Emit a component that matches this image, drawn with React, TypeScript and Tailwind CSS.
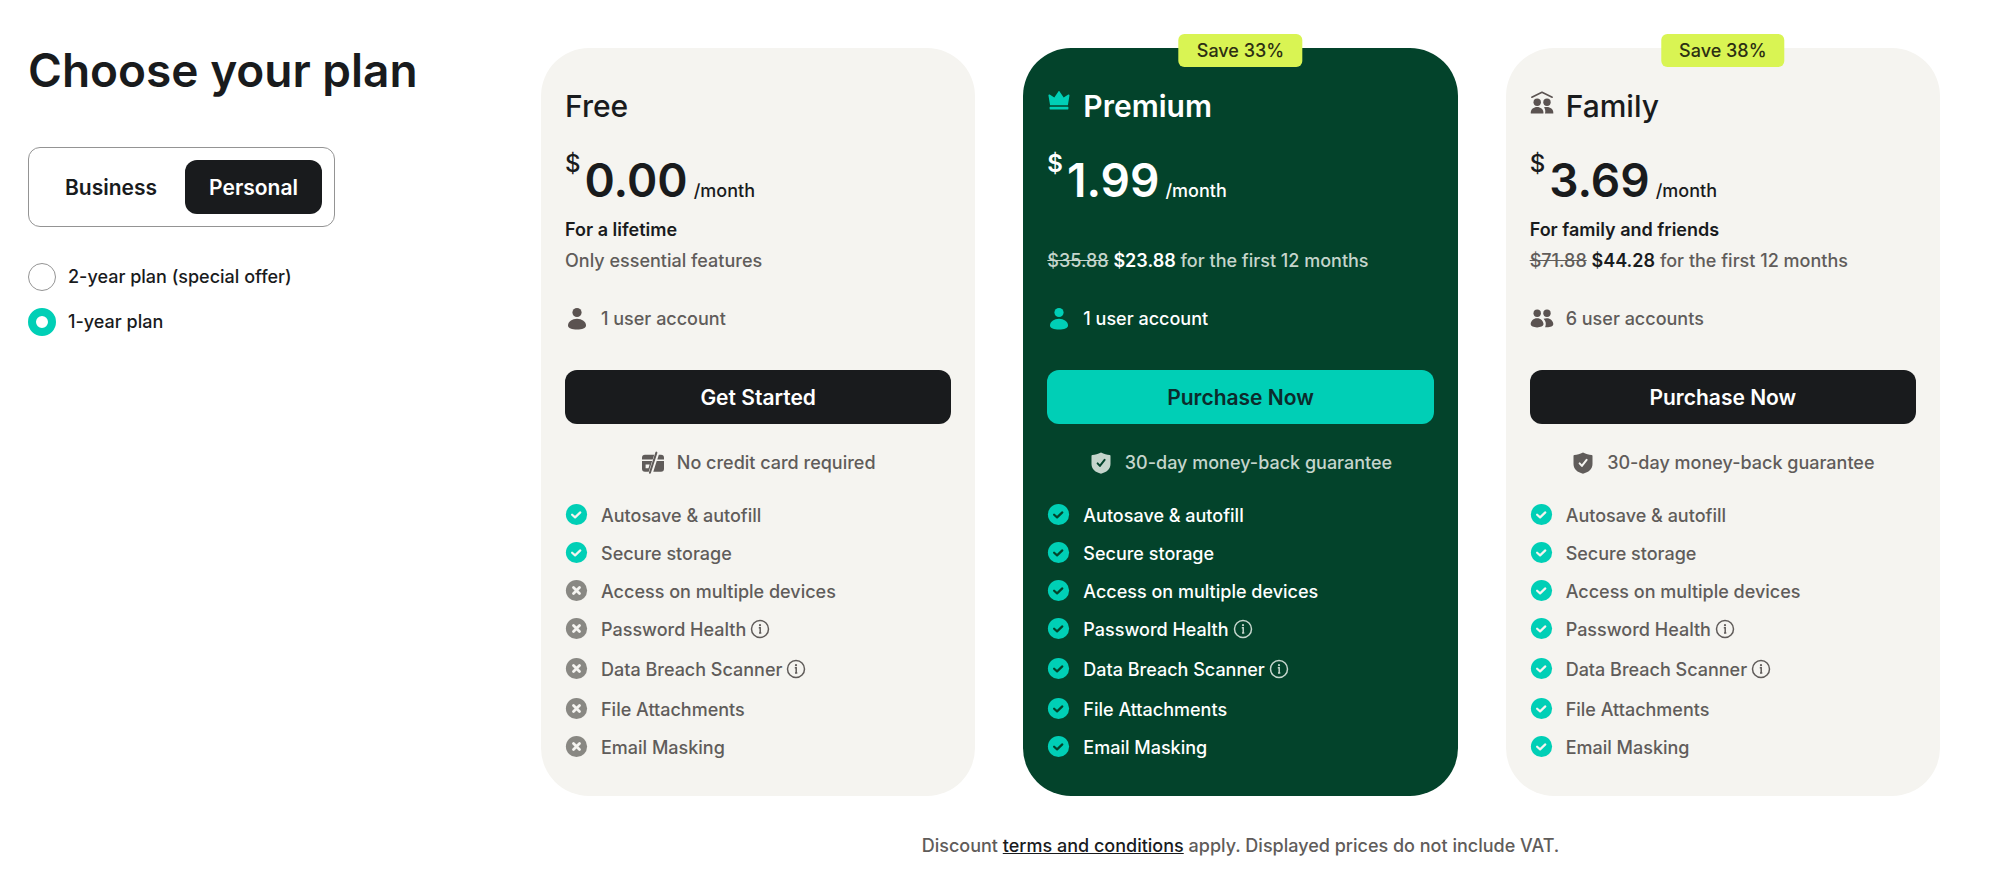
import { useState } from 'react'
import type { ReactNode } from 'react'
import { clsx } from 'clsx'

interface Feature {
  label: string
  included: boolean
  info?: boolean
}

interface Plan {
  name: string
  icon?: ReactNode
  badge?: string
  price: string
  tagline: string
  oldTotal?: string
  total?: string
  summary: string
  accountIcon: ReactNode
  accounts: string
  cta: string
  noteIcon: ReactNode
  note: string
  featured?: boolean
  features: Feature[]
}

function CrownIcon() {
  return (
    <svg viewBox="0 0 24 24" className="size-6 shrink-0" fill="currentColor" aria-hidden="true">
      <path d="M1.4 4.200c0-.7.8-1 1.300-.6L7.300 6.600 11.400.4c.3-.5.900-.5 1.200 0l4.100 6.200 4.600-3c.5-.4 1.300.1 1.200.700L20.900 14.200H3.100L1.400 4.200z" />
      <rect x="2.600" y="15.800" width="18.800" height="2.600" rx="0.6" />
    </svg>
  )
}

function HouseholdIcon() {
  return (
    <svg viewBox="0 0 24 24" className="size-6 shrink-0" fill="currentColor" aria-hidden="true">
      <path d="M1.800 6.200 12 1.200l10.200 5" fill="none" stroke="currentColor" strokeWidth="1.600" strokeLinecap="round" strokeLinejoin="round" />
      <circle cx="7.200" cy="11.200" r="3.700" />
      <circle cx="17" cy="11.200" r="3.700" />
      <path d="M.8 22.500v-1.200c0-2.900 2.900-5.300 6.300-5.300s6.300 2.400 6.300 5.300v1.200H.8z" />
      <path d="M14 16.300c.9-.2 1.900-.3 2.900-.3 3.500 0 6.400 2.400 6.400 5.400v1.100h-8.300c.6-2.500.3-4.300-1-6.200z" />
    </svg>
  )
}

function UserIcon() {
  return (
    <svg viewBox="0 0 24 24" className="size-6 shrink-0" fill="currentColor" aria-hidden="true">
      <circle cx="12" cy="5.500" r="4.600" />
      <path d="M12 11.700c5 0 9 3 9 6.700 0 2.800-4 4-9 4s-9-1.200-9-4c0-3.700 4-6.700 9-6.700z" />
    </svg>
  )
}

function UsersIcon() {
  return (
    <svg viewBox="0 0 24 24" className="size-6 shrink-0" fill="currentColor" aria-hidden="true">
      <circle cx="7.200" cy="6.300" r="3.700" />
      <circle cx="17" cy="6.300" r="3.700" />
      <path d="M7.100 11.200c3.600 0 6.400 2.700 6.400 5.900 0 2.300-2.900 3.300-6.400 3.300s-6.400-1-6.400-3.300c0-3.200 2.800-5.900 6.400-5.900z" />
      <path d="M13.600 11.800c1-.4 2-.6 3.200-.6 3.600 0 6.500 2.700 6.500 5.900 0 2.500-3.400 3.500-8.200 3.200 1.300-2.900.9-6-1.500-8.500z" />
    </svg>
  )
}

function NoCardIcon() {
  return (
    <svg viewBox="0 0 24 24" className="size-6 shrink-0" fill="currentColor" aria-hidden="true">
      <path d="M4 3.800h9.200l-1.500 4.600H1V6.800a3 3 0 0 1 3-3z" />
      <path d="M1 10.100h10.100L9 16.700l-1.300 4.100H4a3 3 0 0 1-3-3v-7.700zm3.600 3.500v3.700h2.900l1.100-3.700h-4z" fillRule="evenodd" />
      <path d="M17.800 3.800H20a3 3 0 0 1 3 3v1.600h-6.700l1.500-4.600z" />
      <path d="M15.700 10.100H23v7.700a3 3 0 0 1-3 3h-7.700l3.400-10.700z" />
      <path d="M15.400 1.600 8.900 21.800" stroke="currentColor" strokeWidth="2" strokeLinecap="round" />
    </svg>
  )
}

function ShieldIcon() {
  return (
    <svg viewBox="0 0 24 24" className="size-6 shrink-0" aria-hidden="true">
      <path
        d="M12 1.400c3 1.500 6 2.300 8.600 2.500.500 0 .9.400.9.900v8.200c0 5-4 8.400-9.500 9.700-5.500-1.300-9.500-4.700-9.500-9.700V4.800c0-.5.400-.9.900-.9C6 3.700 9 2.900 12 1.400z"
        fill="currentColor"
      />
      <path d="m8.600 12.400 2.300 2.500 4.700-6" className="stroke-(--card)" fill="none" strokeWidth="2" strokeLinecap="round" strokeLinejoin="round" />
    </svg>
  )
}

function StatusIcon({ included }: { included: boolean }) {
  return (
    <svg
      viewBox="0 0 24 24"
      className={clsx('size-6 shrink-0', included ? 'text-[#00cfb6]' : 'text-[#898883]')}
      role="img"
      aria-label={included ? 'Included' : 'Not included'}
    >
      <circle cx="11.500" cy="11.500" r="10.600" fill="currentColor" />
      <path
        d={included ? 'm7.100 11.700 3 2.700 5.200-5' : 'm8.500 8.500 6 6m0-6-6 6'}
        className="stroke-(--card)"
        fill="none"
        strokeWidth={included ? 2.2 : 2.8}
        strokeLinecap="round"
        strokeLinejoin="round"
      />
    </svg>
  )
}

function InfoIcon() {
  return (
    <svg viewBox="0 0 20 20" className="size-5" fill="none" stroke="currentColor" aria-hidden="true">
      <circle cx="10" cy="10" r="8.500" strokeWidth="1.500" />
      <path d="M8.800 8.700h1.400V14M9 14h2.300" strokeWidth="1.500" />
      <circle cx="10" cy="6.200" r="1.100" fill="currentColor" stroke="none" />
    </svg>
  )
}

function buildFeatures(includedCount: number): Feature[] {
  const labels = [
    'Autosave & autofill',
    'Secure storage',
    'Access on multiple devices',
    'Password Health',
    'Data Breach Scanner',
    'File Attachments',
    'Email Masking',
  ]
  return labels.map((label, i) => ({
    label,
    included: i < includedCount,
    info: label === 'Password Health' || label === 'Data Breach Scanner',
  }))
}

const plans: Plan[] = [
  {
    name: 'Free',
    price: '0.00',
    tagline: 'For a lifetime',
    summary: 'Only essential features',
    accountIcon: <UserIcon />,
    accounts: '1 user account',
    cta: 'Get Started',
    noteIcon: <NoCardIcon />,
    note: 'No credit card required',
    features: buildFeatures(2),
  },
  {
    name: 'Premium',
    icon: <CrownIcon />,
    badge: 'Save 33%',
    price: '1.99',
    tagline: '',
    oldTotal: '$35.88',
    total: '$23.88',
    summary: 'for the first 12 months',
    accountIcon: <UserIcon />,
    accounts: '1 user account',
    cta: 'Purchase Now',
    noteIcon: <ShieldIcon />,
    note: '30-day money-back guarantee',
    featured: true,
    features: buildFeatures(7),
  },
  {
    name: 'Family',
    icon: <HouseholdIcon />,
    badge: 'Save 38%',
    price: '3.69',
    tagline: 'For family and friends',
    oldTotal: '$71.88',
    total: '$44.28',
    summary: 'for the first 12 months',
    accountIcon: <UsersIcon />,
    accounts: '6 user accounts',
    cta: 'Purchase Now',
    noteIcon: <ShieldIcon />,
    note: '30-day money-back guarantee',
    features: buildFeatures(7),
  },
]

function PlanCard({ plan }: { plan: Plan }) {
  const { featured } = plan
  const strong = featured ? 'text-white' : 'text-[#191b1d]'
  const body = featured ? 'text-white' : 'text-[#605c5a]'
  const muted = featured ? 'text-[#c5d5cc]' : 'text-[#605c5a]'
  const iconColor = featured ? 'text-[#00cfb6]' : 'text-[#5b5351]'
  const heavier = featured && 'font-semibold'

  return (
    <article
      className={clsx(
        'relative flex-1 rounded-[48px] px-6 pt-10 pb-[35px] text-[18px] leading-7 font-medium',
        featured ? 'bg-[#03432b] [--card:#03432b]' : 'bg-[#f5f4f0] [--card:#f5f4f0]',
      )}
    >
      {plan.badge && (
        <span className="absolute top-0 left-1/2 -mt-3.5 -translate-x-1/2 rounded-md bg-[#d9f453] px-4.5 pt-[3px] pb-0.5 whitespace-nowrap text-[#2c2f12]">
          {plan.badge}
        </span>
      )}

      <div className="flex gap-3">
        {plan.icon && <span className={clsx('pt-[3px]', iconColor)}>{plan.icon}</span>}
        <h2 className={clsx('text-[30px] leading-9', strong, heavier)}>{plan.name}</h2>
      </div>

      {/* currency sign hangs at the top of the digits, the period sits on their baseline */}
      <p className={clsx('mt-6 flex items-start', strong)}>
        <span className={clsx('text-[24px] leading-8', heavier)}>$</span>
        <span className="ml-1 text-[46px] leading-16 font-semibold">{plan.price}</span>
        <span className="ml-1.5 self-end pb-[7px]">/month</span>
      </p>

      <p className={clsx('mt-1 h-7 font-semibold', strong)}>{plan.tagline}</p>
      <p className={clsx('mt-[3px]', muted)}>
        {plan.oldTotal && <s>{plan.oldTotal}</s>}{' '}
        {plan.total && <span className={clsx('font-semibold', strong)}>{plan.total}</span>} {plan.summary}
      </p>

      <p className={clsx('mt-[30px] flex items-center gap-3', body)}>
        <span className={iconColor}>{plan.accountIcon}</span>
        {plan.accounts}
      </p>

      <button
        type="button"
        className={clsx(
          'mt-[37px] h-[54px] w-full rounded-xl pt-px text-[21px] font-semibold',
          featured ? 'bg-[#00cfb6] text-[#0c2b2b]' : 'bg-[#191b1d] text-white',
        )}
      >
        {plan.cta}
      </button>

      <p className={clsx('mt-[25px] flex items-center justify-center gap-3', muted)}>
        {plan.noteIcon}
        {plan.note}
      </p>

      <ul className="mt-[26px] space-y-3 leading-[26px]">
        {plan.features.map((f) => (
          <li key={f.label} className={clsx('flex items-start gap-3', f.info && 'min-h-7', body)}>
            <StatusIcon included={f.included} />
            <span>{f.label}</span>
            {f.info && (
              <button type="button" className={clsx('-ml-2 pt-0.5', muted)} aria-label={`About ${f.label}`}>
                <InfoIcon />
              </button>
            )}
          </li>
        ))}
      </ul>
    </article>
  )
}

const audiences = ['Business', 'Personal']

const terms = [
  { id: '2y', label: '2-year plan (special offer)' },
  { id: '1y', label: '1-year plan' },
]

export default function App() {
  const [audience, setAudience] = useState('Personal')
  const [term, setTerm] = useState('1y')

  return (
    <main className="flex bg-white pt-12 pr-[60px] pb-6 pl-7 font-[Inter,sans-serif] text-[18px] leading-7 font-medium text-[#191b1d]">
      <section className="w-[513px] shrink-0">
        <h1 className="text-[46px] leading-11 font-semibold">Choose your plan</h1>

        <div className="mt-[55px] inline-flex gap-1 rounded-xl border border-[#949494] p-3">
          {audiences.map((a) => (
            <button
              key={a}
              type="button"
              aria-pressed={a === audience}
              onClick={() => setAudience(a)}
              className={clsx(
                'h-[54px] rounded-xl px-6 pt-px text-[21px] font-semibold',
                a === audience && 'bg-[#191b1d] text-white',
              )}
            >
              {a}
            </button>
          ))}
        </div>

        <fieldset className="mt-9 space-y-[17px]">
          {terms.map((t) => (
            <label key={t.id} className="flex items-center gap-3">
              <input
                type="radio"
                name="term"
                value={t.id}
                checked={t.id === term}
                onChange={() => setTerm(t.id)}
                className="size-7 appearance-none rounded-full border border-[#949494] bg-white checked:border-8 checked:border-[#00cfb6]"
              />
              {t.label}
            </label>
          ))}
        </fieldset>
      </section>

      <section className="min-w-0 flex-1">
        <div className="flex gap-12">
          {plans.map((p) => (
            <PlanCard key={p.name} plan={p} />
          ))}
        </div>
        <p className="mt-9 text-center text-[#605c5a]">
          Discount{' '}
          <a href="#terms" className="text-[#191b1d] underline">
            terms and conditions
          </a>{' '}
          apply. Displayed prices do not include VAT.
        </p>
      </section>
    </main>
  )
}
